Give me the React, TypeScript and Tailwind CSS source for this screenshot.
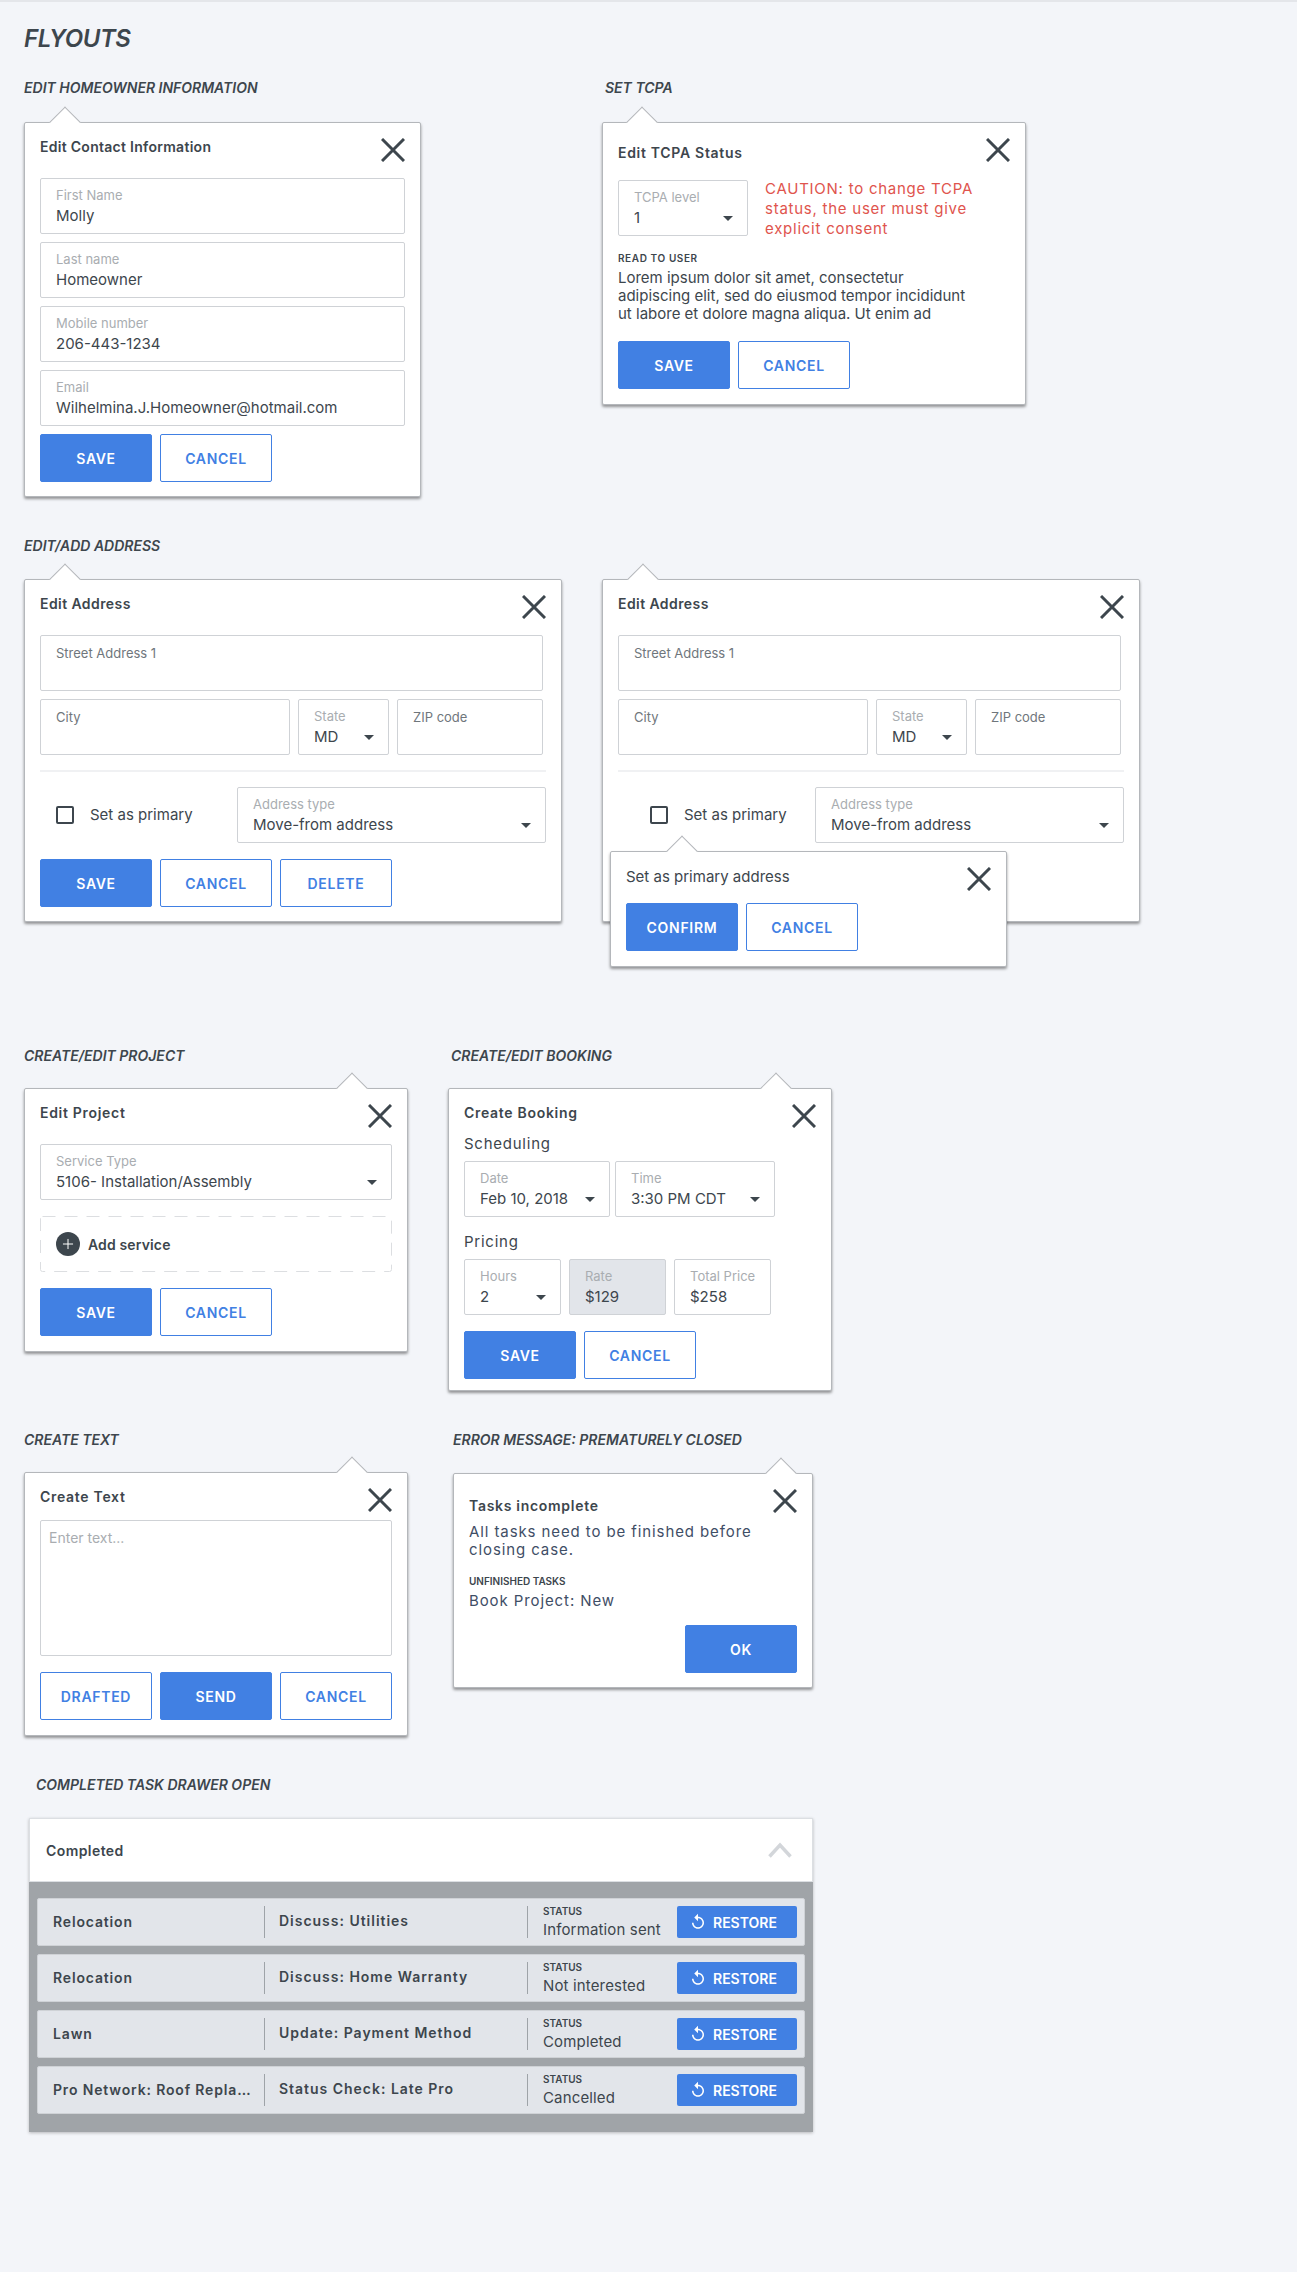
import type { ReactNode } from 'react';
import { twMerge } from 'tailwind-merge';
import clsx from 'clsx';
import { Plus } from 'lucide-react';

function CloseIcon() {
  return (
    <svg width="24" height="24" viewBox="0 0 24 24" className="shrink-0">
      <path d="M1 1 L23 23 M23 1 L1 23" stroke="#3d464d" strokeWidth="3" fill="none" />
    </svg>
  );
}

function Caret() {
  return (
    <svg width="10" height="5" viewBox="0 0 10 5" className="shrink-0">
      <path d="M0 0 H10 L5 5 Z" fill="#3d464d" />
    </svg>
  );
}

function ReplayIcon() {
  return (
    <svg width="18" height="18" viewBox="0 0 24 24" className="shrink-0" fill="#ffffff">
      <path d="M12 5V1L7 6l5 5V7c3.31 0 6 2.69 6 6s-2.69 6-6 6-6-2.69-6-6H4c0 4.42 3.58 8 8 8s8-3.58 8-8-3.58-8-8-8z" />
    </svg>
  );
}

function Label({ children, className }: { children: ReactNode; className?: string }) {
  return (
    <div className={clsx('h-5 text-[14px] leading-5 font-semibold italic text-[#3d464d]', className)}>
      {children}
    </div>
  );
}

const cardBox = 'rounded-[2px] border border-[#b4b7bb] bg-white px-[15px] pt-[15px] pb-[15px] shadow-[0_2px_3px_rgba(0,0,0,0.4)]';
const arrowBox = 'absolute top-[-12px] h-[22px] w-[22px] rotate-45 border-t border-l border-[#b4b7bb] bg-white';

function Card({
  arrow,
  className,
  children,
}: {
  arrow: string;
  className?: string;
  children: ReactNode;
}) {
  return (
    <div className={twMerge('relative', cardBox, className)}>
      <span className={clsx(arrowBox, arrow)} />
      {children}
    </div>
  );
}

function Header({ title, className }: { title: string; className?: string }) {
  return (
    <div className="relative flex h-6 items-start justify-between">
      <div className={clsx('text-[14px] leading-5 font-semibold text-[#3d464d]', className)}>{title}</div>
      <CloseIcon />
    </div>
  );
}

function Field({
  label,
  value,
  select,
  className,
  disabled,
  placeholder,
}: {
  label: string;
  value?: string;
  select?: boolean;
  className?: string;
  disabled?: boolean;
  placeholder?: boolean;
}) {
  return (
    <div
      className={clsx(
        'h-14 shrink-0 rounded-[2px] border border-[#cfd2d6] pt-2 pr-[14px] pl-[15px]',
        disabled ? 'bg-[#e2e5ea]' : 'bg-white',
        className,
      )}
    >
      <div className={clsx('text-[13px] leading-4', placeholder ? 'pt-px text-[#6f767c]' : 'text-[#a9adb1]')}>{label}</div>
      {value && (
        <div className="mt-[3px] flex h-5 items-center justify-between text-[15px] leading-5 text-[#3d464d]">
          <span>{value}</span>
          {select && <Caret />}
        </div>
      )}
    </div>
  );
}

function Btn({ children, primary, className }: { children: ReactNode; primary?: boolean; className?: string }) {
  return (
    <button
      className={clsx(
        'flex h-12 w-28 items-center justify-center rounded-[2px] border border-[#4180e3] text-[14px] font-semibold tracking-[0.05em]',
        primary ? 'bg-[#4180e3] text-white' : 'bg-white text-[#4180e3]',
        className,
      )}
    >
      {children}
    </button>
  );
}

function AddressCard({ popover }: { popover?: boolean }) {
  return (
    <Card arrow="left-[29px]" className="w-[538px] pb-[14px]">
      <Header title="Edit Address" className="mt-[-1px] tracking-[0.03em]" />
      <Field label="Street Address 1" placeholder className="mt-4 w-[503px]" />
      <div className="mt-2 flex w-[503px] gap-2">
        <Field label="City" placeholder className="w-[250px]" />
        <Field label="State" value="MD" select className="w-[91px]" />
        <Field label="ZIP code" placeholder className="w-[146px]" />
      </div>
      <div className="mt-[15px] h-[2px] w-[506px] bg-[#f0f1f3]" />
      <div className="mt-[15px] flex w-[506px] items-center justify-between">
        <div className={clsx('flex items-center', popover ? 'pl-[32px]' : 'pl-4')}>
          <span className="h-[18px] w-[18px] rounded-[2px] border-2 border-[#3d464d]" />
          <span className="ml-4 text-[15px] text-[#3d464d]">Set as primary</span>
        </div>
        <Field label="Address type" value="Move-from address" select className="w-[309px]" />
      </div>
      {popover ? (
        <div className="mt-4 h-12" />
      ) : (
        <div className="mt-4 flex gap-2">
          <Btn primary>SAVE</Btn>
          <Btn>CANCEL</Btn>
          <Btn>DELETE</Btn>
        </div>
      )}
      {popover && (
        <div className={clsx('absolute top-[271px] left-[7px] w-[397px]', cardBox)}>
          <span className={clsx(arrowBox, 'left-[60px]')} />
          <div className="relative flex h-6 items-start justify-between">
            <div className="text-[15px] leading-5 text-[#3d464d]">Set as primary address</div>
            <CloseIcon />
          </div>
          <div className="mt-3 flex gap-2">
            <Btn primary>CONFIRM</Btn>
            <Btn>CANCEL</Btn>
          </div>
        </div>
      )}
    </Card>
  );
}

const completed = [
  ['Relocation', 'Discuss: Utilities', 'Information sent'],
  ['Relocation', 'Discuss: Home Warranty', 'Not interested'],
  ['Lawn', 'Update: Payment Method', 'Completed'],
  ['Pro Network: Roof Repla…', 'Status Check: Late Pro', 'Cancelled'],
];

export default function App() {
  return (
    <div className="min-h-screen overflow-hidden bg-[#f3f5f9] font-['Inter',sans-serif] text-[#3d464d]">
      <div className="h-[2px] bg-[#e4e6ea]" />
      <div className="pl-6">
        <h1 className="mt-[21px] text-[24px] leading-8 font-semibold italic tracking-[-0.02em]">FLYOUTS</h1>

        <div className="mt-[23px] flex gap-[181px]">
          <div>
            <Label className="mb-6">EDIT HOMEOWNER INFORMATION</Label>
            <Card arrow="left-[29px]" className="w-[397px] pb-[14px]">
              <Header title="Edit Contact Information" className="mt-[-1px] tracking-[0.02em]" />
              <div className="mt-4 flex flex-col gap-2">
                <Field label="First Name" value="Molly" />
                <Field label="Last name" value="Homeowner" />
                <Field label="Mobile number" value="206-443-1234" />
                <Field label="Email" value="Wilhelmina.J.Homeowner@hotmail.com" />
              </div>
              <div className="mt-2 flex gap-2">
                <Btn primary>SAVE</Btn>
                <Btn>CANCEL</Btn>
              </div>
            </Card>
          </div>
          <div>
            <Label className="mb-6 ml-[3px]">SET TCPA</Label>
            <Card arrow="left-[28px]" className="w-[424px]">
              <Header title="Edit TCPA Status" className="mt-[5px] tracking-[0.05em]" />
              <div className="mt-[18px] flex">
                <Field label="TCPA level" value="1" select className="w-[130px]" />
                <div className="mt-[-1px] ml-[17px] text-[15px] leading-5 tracking-[0.05em] text-[#e0544d]">
                  CAUTION: to change TCPA
                  <br />
                  status, the user must give
                  <br />
                  explicit consent
                </div>
              </div>
              <div className="mt-[11px] text-[10px] leading-4 font-semibold tracking-[0.06em]">READ TO USER</div>
              <div className="mt-[3px] text-[15px] leading-[18px]">
                Lorem ipsum dolor sit amet, consectetur
                <br />
                adipiscing elit, sed do eiusmod tempor incididunt
                <br />
                ut labore et dolore magna aliqua. Ut enim ad
              </div>
              <div className="mt-[18px] flex gap-2">
                <Btn primary>SAVE</Btn>
                <Btn>CANCEL</Btn>
              </div>
            </Card>
          </div>
        </div>

        <Label className="mt-[39px] mb-[23px]">EDIT/ADD ADDRESS</Label>
        <div className="flex gap-[40px]">
          <AddressCard />
          <AddressCard popover />
        </div>

        <div className="mt-[124px] flex gap-[40px]">
          <div>
            <Label className="mb-[22px]">CREATE/EDIT PROJECT</Label>
            <Card arrow="left-[316px]" className="w-[384px]">
              <Header title="Edit Project" className="mt-[-1px] tracking-[0.05em]" />
              <Field label="Service Type" value="5106- Installation/Assembly" select className="mt-4" />
              <div className="relative mt-4 flex h-14 items-center gap-2 pl-4">
                <svg className="absolute inset-0 h-full w-full" fill="none">
                  <rect x="0.5" y="0.5" width="351" height="55" rx="2" stroke="#dcdee1" strokeDasharray="13 9" />
                </svg>
                <span className="flex h-6 w-6 items-center justify-center rounded-full bg-[#3d464d]">
                  <Plus size={16} color="#ffffff" strokeWidth={1.5} />
                </span>
                <span className="text-[14px] font-semibold tracking-[0.01em]">Add service</span>
              </div>
              <div className="mt-4 flex gap-2">
                <Btn primary>SAVE</Btn>
                <Btn>CANCEL</Btn>
              </div>
            </Card>
          </div>
          <div>
            <Label className="mb-[22px] ml-[3px]">CREATE/EDIT BOOKING</Label>
            <Card arrow="left-[316px]" className="w-[384px] pb-[11px]">
              <Header title="Create Booking" className="mt-[-1px] tracking-[0.05em]" />
              <div className="mt-[6px] text-[15px] leading-5 tracking-[0.05em]">Scheduling</div>
              <div className="mt-[7px] flex gap-[5px]">
                <Field label="Date" value="Feb 10, 2018" select className="w-[146px]" />
                <Field label="Time" value="3:30 PM CDT" select className="w-[160px]" />
              </div>
              <div className="mt-[15px] text-[15px] leading-5 tracking-[0.05em]">Pricing</div>
              <div className="mt-[7px] flex gap-2">
                <Field label="Hours" value="2" select className="w-[97px]" />
                <Field label="Rate" value="$129" disabled className="w-[97px]" />
                <Field label="Total Price" value="$258" className="w-[97px]" />
              </div>
              <div className="mt-4 flex gap-2">
                <Btn primary>SAVE</Btn>
                <Btn>CANCEL</Btn>
              </div>
            </Card>
          </div>
        </div>

        <div className="mt-[39px] flex gap-[45px]">
          <div>
            <Label className="mb-[22px]">CREATE TEXT</Label>
            <Card arrow="left-[316px]" className="w-[384px]">
              <Header title="Create Text" className="mt-[-1px] tracking-[0.05em]" />
              <div className="mt-2 h-[136px] rounded-[2px] border border-[#cfd2d6] pt-[7px] pl-2 text-[14px] leading-5 text-[#a9adb1]">
                Enter text...
              </div>
              <div className="mt-4 flex gap-2">
                <Btn>DRAFTED</Btn>
                <Btn primary>SEND</Btn>
                <Btn>CANCEL</Btn>
              </div>
            </Card>
          </div>
          <div>
            <Label className="mb-[23px]">ERROR MESSAGE: PREMATURELY CLOSED</Label>
            <Card arrow="left-[316px]" className="w-[360px] pb-[14px]">
              <Header title="Tasks incomplete" className="mt-[7px] tracking-[0.05em]" />
              <div className="mt-[10px] text-[15px] leading-[18px] tracking-[0.06em] text-[#3f4e66]">
                All tasks need to be finished before
                <br />
                closing case.
              </div>
              <div className="mt-[14px] text-[10px] leading-4 font-semibold">UNFINISHED TASKS</div>
              <div className="mt-[2px] text-[15px] leading-5 tracking-[0.06em] text-[#3f4e66]">Book Project: New</div>
              <div className="mt-[14px] flex justify-end">
                <Btn primary>OK</Btn>
              </div>
            </Card>
          </div>
        </div>

        <Label className="mt-[39px] mb-[23px] ml-3">COMPLETED TASK DRAWER OPEN</Label>
        <div className="ml-[5px] w-[784px] shadow-[0_1px_3px_rgba(0,0,0,0.25)]">
          <div className="flex h-16 items-center justify-between border border-[#dcdfe3] bg-white pr-5 pl-4">
            <span className="text-[14px] font-semibold tracking-[0.03em]">Completed</span>
            <svg width="24" height="16" viewBox="0 0 24 16">
              <path d="M1.5 14.5 L12 3 L22.5 14.5" stroke="#d3d6da" strokeWidth="3.5" fill="none" />
            </svg>
          </div>
          <div className="flex flex-col gap-2 bg-[#a0a4a8] px-2 pt-4 pb-[18px]">
            {completed.map((row) => (
              <div key={row[1]} className="flex h-12 items-center rounded-[2px] border border-[#cfd2d6] bg-[#e2e5ea] pr-[7px] pl-[15px]">
                <div className="w-[211px] pb-[2px] text-[14px] font-semibold whitespace-nowrap tracking-[0.06em]">{row[0]}</div>
                <div className="h-8 w-[263px] border-l border-[#9ea3a8] pl-[14px] text-[14px] leading-[29px] font-semibold tracking-[0.07em]">
                  {row[1]}
                </div>
                <div className="h-8 border-l border-[#9ea3a8] pl-[15px]">
                  <div className="mt-[-1px] text-[10px] leading-3 font-semibold">STATUS</div>
                  <div className="mt-[4px] text-[15px] leading-[17px] tracking-[0.01em]">{row[2]}</div>
                </div>
                <button className="ml-auto flex h-8 w-[120px] items-center gap-[6px] rounded-[2px] bg-[#4180e3] pl-3 text-[14px] font-semibold text-white">
                  <ReplayIcon />
                  RESTORE
                </button>
              </div>
            ))}
          </div>
        </div>
      </div>
    </div>
  );
}
